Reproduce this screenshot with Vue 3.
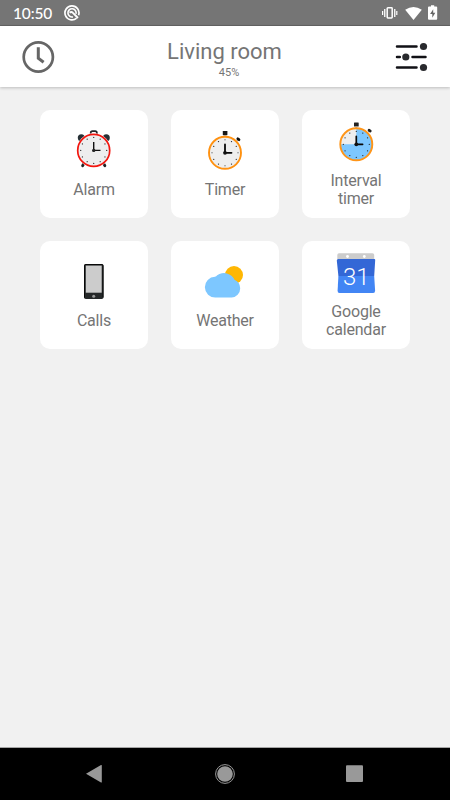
<script setup>
const ticks = (cx, cy, r) =>
  Array.from({ length: 12 }, (_, i) => {
    const a = (i * Math.PI) / 6
    return { x: cx + r * Math.sin(a), y: cy - r * Math.cos(a), major: i % 3 === 0 }
  })
const alarmTicks = ticks(29.7, 30.4, 13)
const timerTicks = ticks(30, 32.8, 13)
const intervalTicks = ticks(30.3, 29.3, 13)

const apps = [
  { id: 'alarm', label: 'Alarm', view: '6 9 48 44' },
  { id: 'timer', label: 'Timer', view: '6 9 48 44' },
  { id: 'interval', label: 'Interval timer', view: '6 5 48 44' },
  { id: 'calls', label: 'Calls', view: '6 10 48 44' },
  { id: 'weather', label: 'Weather', view: '6 10 48 44' },
  { id: 'calendar', label: 'Google calendar', view: '6 6 48 44' },
]
</script>

<template>
  <div class="screen">
    <div class="status">
      <span class="time">10:50</span>
      <svg class="badge" width="16" height="16" viewBox="0 0 16 16" fill="none" stroke="#fff">
        <path d="M12.6 13.2A7 7 0 1 1 14.6 10.2" stroke-width="1.7" />
        <path d="M8.9 11.9A4.1 4.1 0 1 1 12 8.9" stroke-width="1.6" />
        <path d="M5.5 7.6Q7.5 6.4 8.7 7.7L14 13" stroke-width="1.9" />
      </svg>
      <svg class="system" width="58" height="16" viewBox="0 0 58 16" fill="#fff">
        <rect x="6.2" y="2.8" width="5" height="10.2" rx=".7" fill="none" stroke="#fff" stroke-width="1.5" />
        <path d="M3.1 4h1.3v8H3.1zM13.1 4h1.3v8h-1.3zM1 6h1.2v4H1zM15.2 6h1.2v4h-1.2z" />
        <path d="M24.2 4.8Q32.5-1 40.8 4.8L32.5 15Z" />
        <path d="M48 1.500h2V.2h3.200v1.300h2q1 0 1 1v11.200q0 1-1 1H48q-1 0-1-1V2.500q0-1 1-1z" />
        <path d="M52.200 4.200 49.100 9h2.200v3.700L54.300 7.800h-2.100z" fill="#666" />
      </svg>
    </div>

    <header class="bar">
      <svg width="34" height="34" viewBox="0 0 34 34" fill="none" stroke="#666">
        <circle cx="17.300" cy="17" r="14.6" stroke-width="2.7" />
        <path d="M17.300 7.300v11l5.300 4" stroke-width="3" />
      </svg>
      <div class="heading">
        <h1>Living room</h1>
        <span class="percent">45%</span>
      </div>
      <svg width="34" height="34" viewBox="0 0 34 34" fill="#292a2e">
        <path d="M3 6.500h19.500M3 17h2.800M18.500 17h13M3 27.500h19.500" stroke="#111116" stroke-width="2.500" stroke-linecap="round" />
        <circle cx="29.500" cy="6.500" r="3.600" />
        <circle cx="11.800" cy="17" r="3.600" />
        <circle cx="29.500" cy="27.500" r="3.600" />
      </svg>
    </header>

    <main class="grid">
      <div v-for="app in apps" :key="app.id" class="card">
        <svg width="48" height="44" :viewBox="app.view">
          <g v-if="app.id === 'alarm'">
            <path d="M26.700 14.500v-1.500q0-1.800 1.800-1.800h2.600q1.800 0 1.800 1.800v1.500" fill="none" stroke="#222629" stroke-width="1.700" />
            <path d="M20.500 42.500 18.600 45.700M39 42.500 40.900 45.700" stroke="#202326" stroke-width="2.800" stroke-linecap="round" />
            <circle cx="17.300" cy="17.800" r="3.500" fill="#263035" />
            <circle cx="42.300" cy="17.800" r="3.500" fill="#263035" />
            <circle cx="29.700" cy="30.400" r="17.100" fill="#fff" />
            <circle cx="29.700" cy="30.400" r="16" fill="#eee" stroke="#f3160f" stroke-width="1.700" />
            <circle v-for="(t, i) in alarmTicks" :key="i" :cx="t.x" :cy="t.y" r=".65" fill="#333" />
            <path d="M29.700 22v8.400h6.800" fill="none" stroke="#111" stroke-width="1.400" />
            <circle cx="29.700" cy="30.400" r="1.700" fill="#222" />
          </g>
          <g v-else-if="app.id === 'timer'">
            <rect x="27.800" y="11" width="4.600" height="4.200" rx=".4" fill="#171717" />
            <path d="M29 15h2v2h-2z" fill="#aaa" />
            <path d="M41.800 20.800 43.300 19.300" stroke="#888" stroke-width="1" />
            <path d="M42.800 18.800 44 19.700" stroke="#111" stroke-width="2.700" stroke-linecap="round" />
            <circle cx="30" cy="32.800" r="16" fill="#eee" stroke="#ff9110" stroke-width="1.900" />
            <circle v-for="(t, i) in timerTicks" :key="i" :cx="t.x" :cy="t.y" :r="t.major ? 0.8 : 0.65" :fill="t.major ? '#888' : '#222'" />
            <path d="M30 24.500v8.300h6.500" fill="none" stroke="#080808" stroke-width="1.800" stroke-linecap="round" />
            <circle cx="30" cy="32.800" r="1.900" fill="#111" />
          </g>
          <g v-else-if="app.id === 'interval'">
            <rect x="28" y="7.500" width="4.700" height="4.100" rx=".4" fill="#222" />
            <path d="M29.300 11.500h2v2h-2z" fill="#aaa" />
            <path d="M42 17.300 43.500 15.800" stroke="#888" stroke-width="1" />
            <path d="M43 15.200 44.300 16.100" stroke="#222" stroke-width="2.700" stroke-linecap="round" />
            <circle cx="30.300" cy="29.300" r="16" fill="#7dc7ff" />
            <path d="M30.300 29.300v-16a16 16 0 0 0-16 16z" fill="#eee" />
            <circle cx="30.300" cy="29.300" r="16" fill="none" stroke="#ff9518" stroke-width="1.900" />
            <circle v-for="(t, i) in intervalTicks" :key="i" :cx="t.x" :cy="t.y" r=".65" fill="#222" />
            <path d="M30.300 21.300v8h6.300" fill="none" stroke="#080808" stroke-width="1.700" stroke-linecap="round" />
            <circle cx="30.300" cy="29.300" r="1.900" fill="#111" />
          </g>
          <g v-else-if="app.id === 'calls'">
            <rect x="20" y="14" width="19.500" height="35" rx="1.800" fill="#252829" />
            <path d="M20.500 47.300V15.700q0-1.200 1.200-1.200h16.100q1.200 0 1.200 1.200v31.600" fill="none" stroke="#090909" />
            <rect x="21.800" y="15.600" width="15.900" height="27.100" fill="#ccc" />
            <circle cx="29.700" cy="46.200" r="1.500" fill="#999" />
          </g>
          <g v-else-if="app.id === 'weather'">
            <circle cx="39" cy="25" r="9" fill="#ffb703" />
            <path d="M20.500 47.500A10.400 10.400 0 0 1 20 26.700Q21.200 26.400 22.200 25.300A11.500 11.500 0 0 1 39.500 29.800Q45 32.300 45.200 38.200A8.600 9.300 0 0 1 36.500 47.500Z" fill="#7dc7ff" />
          </g>
          <g v-else>
            <path d="M11.300 14.500v-4.500q0-1.700 1.700-1.700h33.500q1.700 0 1.700 1.700v4.500z" fill="#ccc" />
            <circle cx="21.500" cy="11.500" r="1.400" fill="#fff" />
            <circle cx="38.300" cy="11.500" r="1.400" fill="#fff" />
            <path d="M12.300 14h36q1 0 .9 1L48.200 31H12.400L10.800 15.500q0-1.500 1.500-1.500z" fill="#3367d6" />
            <path d="M12.400 31h35.800l.9 14.800q0 2.200-2 2.200H13.500q-2 0-1.900-2.200z" fill="#4285f4" />
            <text x="30.200" y="39.600" text-anchor="middle" class="day">31</text>
          </g>
        </svg>
        <span class="label">{{ app.label }}</span>
      </div>
    </main>

    <nav class="nav">
      <svg width="20" height="20" viewBox="0 0 20 20"><path d="M2 9.700 17 1.100q.8-.4.800.5v16.400q0 .9-.8.400z" fill="#999" /></svg>
      <svg width="20" height="20" viewBox="0 0 20 20">
        <circle cx="10" cy="10" r="9.400" fill="none" stroke="#999" />
        <circle cx="10" cy="10" r="7.800" fill="#999" />
      </svg>
      <svg width="20" height="20" viewBox="0 0 20 20"><rect x="1" y="1.300" width="17" height="16.700" rx="1" fill="#999" /></svg>
    </nav>
  </div>
</template>

<style>
body {
  margin: 0;
}
</style>

<style scoped>
.screen {
  width: 450px;
  height: 800px;
  display: flex;
  flex-direction: column;
  overflow: hidden;
  background: #f1f1f1;
  font-family: Roboto, sans-serif;
  color: #757575;
}
svg {
  display: block;
  flex: none;
}
.status {
  box-sizing: border-box;
  height: 26px;
  flex: none;
  display: flex;
  align-items: center;
  padding: 0 11px 0 13px;
  background: #757575;
  border-bottom: 1px solid #646464;
  color: #fff;
}
.time {
  width: 51px;
  padding-top: 1px;
  font: 500 15.5px/24px Lato, sans-serif;
  letter-spacing: -0.15px;
  white-space: nowrap;
}
.system {
  margin-left: auto;
}
.bar {
  box-sizing: border-box;
  height: 61px;
  flex: none;
  display: flex;
  align-items: center;
  justify-content: space-between;
  padding: 0 22px 0 21px;
  background: #fff;
  box-shadow: 0 1px 3px rgba(0, 0, 0, 0.22);
}
.heading {
  display: flex;
  flex-direction: column;
  align-items: center;
  padding-top: 6px;
}
h1 {
  margin: 0;
  font-size: 22px;
  font-weight: 400;
  line-height: 26px;
}
.percent {
  margin-left: 9px;
  font-size: 11px;
  line-height: 16px;
}
.grid {
  flex: 1;
  display: grid;
  grid-template-columns: repeat(3, 108px);
  grid-auto-rows: 108px;
  align-content: start;
  gap: 23px;
  padding: 23px 0 0 40px;
}
.card {
  box-sizing: border-box;
  display: flex;
  flex-direction: column;
  align-items: center;
  justify-content: center;
  gap: 8px;
  padding: 0 20px;
  border-radius: 10px;
  background: #fff;
}
.label {
  font-size: 16px;
  line-height: 18px;
  letter-spacing: -0.2px;
  text-align: center;
}
.day {
  font: 300 24px Roboto, sans-serif;
  fill: #fff;
}
.nav {
  box-sizing: border-box;
  height: 53px;
  flex: none;
  display: flex;
  align-items: center;
  justify-content: space-between;
  padding: 0 85px 0 84px;
  border-top: 1px solid #a5a5a5;
  background: #000;
}
</style>
